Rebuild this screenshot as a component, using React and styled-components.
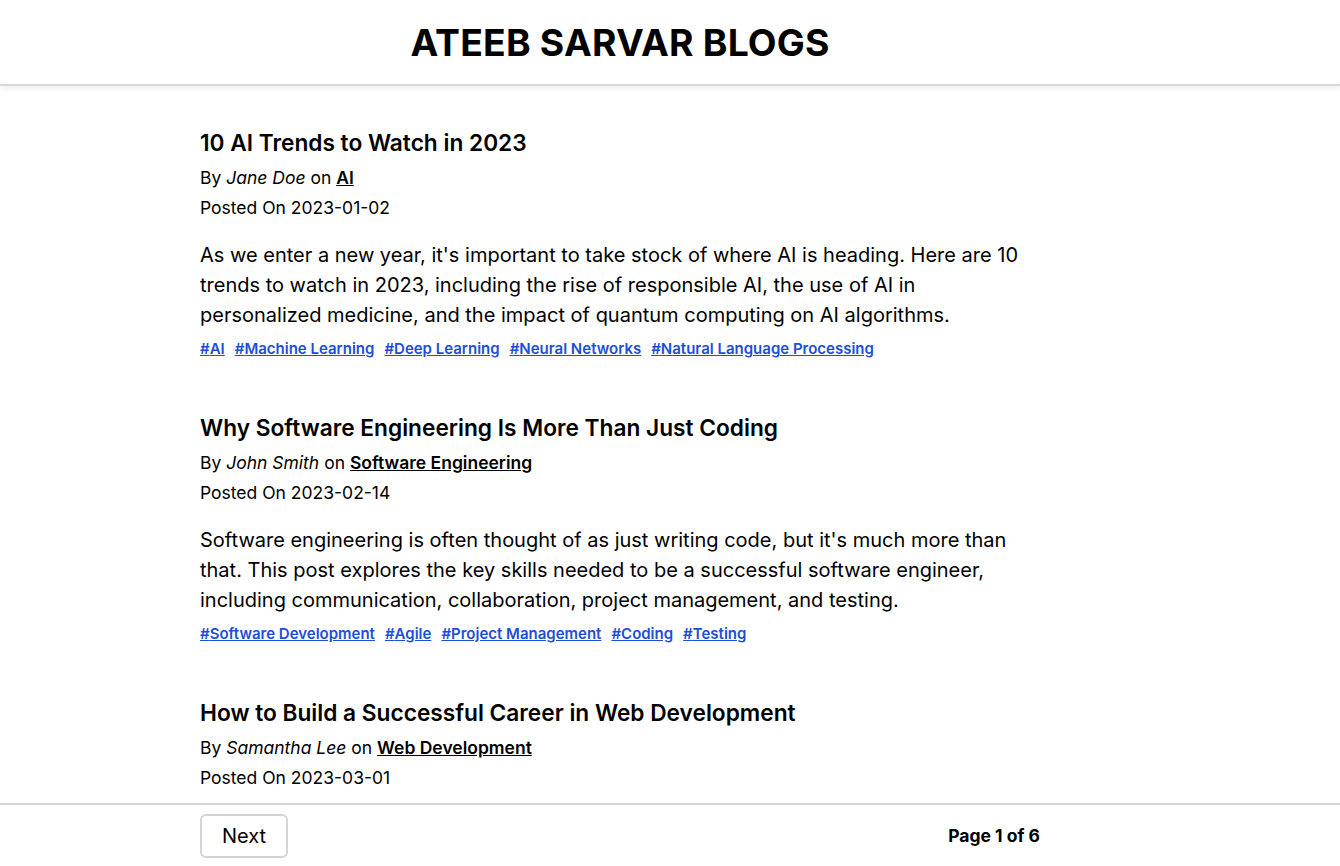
import React from "react";
import styled, { createGlobalStyle } from "styled-components";

const posts = [
  {
    title: "10 AI Trends to Watch in 2023",
    author: "Jane Doe",
    category: "AI",
    date: "2023-01-02",
    body: "As we enter a new year, it's important to take stock of where AI is heading. Here are 10 trends to watch in 2023, including the rise of responsible AI, the use of AI in personalized medicine, and the impact of quantum computing on AI algorithms.",
    tags: ["AI", "Machine Learning", "Deep Learning", "Neural Networks", "Natural Language Processing"],
  },
  {
    title: "Why Software Engineering Is More Than Just Coding",
    author: "John Smith",
    category: "Software Engineering",
    date: "2023-02-14",
    body: "Software engineering is often thought of as just writing code, but it's much more than that. This post explores the key skills needed to be a successful software engineer, including communication, collaboration, project management, and testing.",
    tags: ["Software Development", "Agile", "Project Management", "Coding", "Testing"],
  },
  {
    title: "How to Build a Successful Career in Web Development",
    author: "Samantha Lee",
    category: "Web Development",
    date: "2023-03-01",
    body: "Web development is a fast-moving field with plenty of opportunities. Here is how to build the skills, portfolio and network you need to grow a lasting career.",
    tags: ["Web Development", "Career", "JavaScript"],
  },
];

const App = () => {
  return (
    <>
      <GlobalStyle />
      <Header>
        <Brand>ATEEB SARVAR BLOGS</Brand>
      </Header>
      <Main>
        {posts.map((post) => (
          <Post key={post.title}>
            <Title>{post.title}</Title>
            <Meta>
              By <em>{post.author}</em> on <Category href="#">{post.category}</Category>
            </Meta>
            <Meta>Posted On {post.date}</Meta>
            <Body>{post.body}</Body>
            <Tags>
              {post.tags.map((tag) => (
                <Tag key={tag} href="#">#{tag}</Tag>
              ))}
            </Tags>
          </Post>
        ))}
      </Main>
      <Footer>
        <FooterInner>
          <NextButton>Next</NextButton>
          <PageInfo>Page 1 of 6</PageInfo>
        </FooterInner>
      </Footer>
    </>
  );
};

const GlobalStyle = createGlobalStyle`
    body {
        margin: 0;
        font-family: Inter, "Noto Sans", sans-serif;
        color: #000;
        background: #fff;
        overflow: hidden;
    }
`;

const Header = styled.header`
    height: 86px;
    display: flex;
    align-items: center;
    justify-content: center;
    padding-right: 100px;
    border-bottom: 2px solid #d8d9e0;
    box-shadow: 0 3px 6px rgba(0, 0, 0, 0.06);
    box-sizing: border-box;
`;

const Brand = styled.h1`
    margin: 0;
    font-size: 37.3px;
    font-weight: 700;
    letter-spacing: 0.2px;
`;

const Main = styled.main`
    width: 840px;
    margin: 0 0 0 200px;
    padding-top: 41px;
`;

const Post = styled.article`
    margin-bottom: 53px;
`;

const Title = styled.h2`
    margin: 0 0 4px;
    font-size: 22.7px;
    font-weight: 600;
    line-height: 32px;
`;

const Meta = styled.p`
    margin: 0;
    font-size: 17.5px;
    line-height: 30px;
`;

const Category = styled.a`
    color: #000;
    font-weight: 600;
    text-decoration: underline;
`;

const Body = styled.p`
    margin: 17px 0 9px;
    font-size: 20px;
    line-height: 30px;
    max-width: 830px;
`;

const Tags = styled.div`
    display: flex;
    flex-wrap: wrap;
    gap: 10px;
`;

const Tag = styled.a`
    color: #1d4ed8;
    font-size: 15px;
    font-weight: 600;
    line-height: 20px;
    text-decoration: underline;
`;

const Footer = styled.footer`
    position: fixed;
    left: 0;
    right: 0;
    bottom: 0;
    height: 63px;
    box-sizing: border-box;
    background: #fff;
    border-top: 2px solid #d4d5dc;
`;

const FooterInner = styled.div`
    width: 840px;
    margin-left: 200px;
    height: 100%;
    display: flex;
    align-items: center;
    justify-content: space-between;
`;

const NextButton = styled.button`
    width: 88px;
    height: 44px;
    font-family: Inter, sans-serif;
    font-size: 20px;
    color: #000;
    background: #fff;
    border: 2px solid #d4d5dc;
    border-radius: 6px;
`;

const PageInfo = styled.span`
    font-size: 17.5px;
    font-weight: 700;
`;

export default App;
